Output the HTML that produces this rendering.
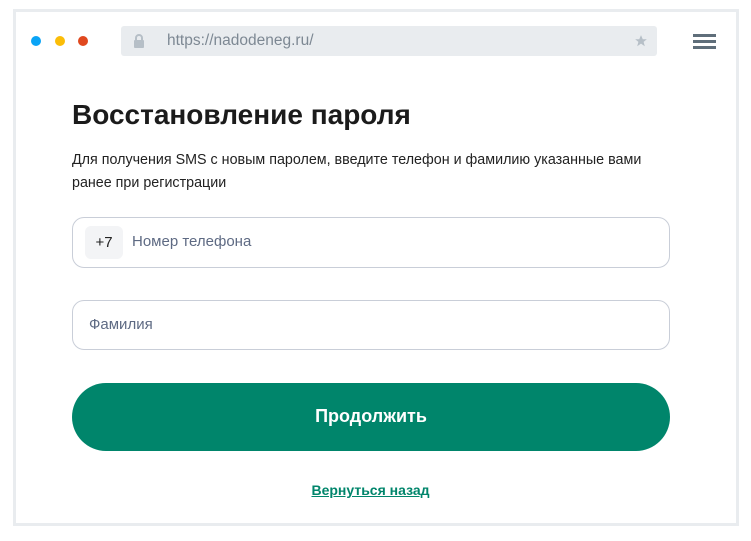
<!DOCTYPE html>
<html><head><meta charset="utf-8"><style>
*{margin:0;padding:0;box-sizing:border-box}
body{width:751px;height:541px;background:#fff;font-family:"Liberation Sans",sans-serif;position:relative;overflow:hidden}
.frame{position:absolute;left:13px;top:9px;width:726px;height:517px;border:3px solid #e9ecef}
.dot{position:absolute;top:36px;width:10px;height:10px;border-radius:50%}
.bar{position:absolute;left:121px;top:26px;width:536px;height:30px;background:#e9ecef;border-radius:3px}
.url{position:absolute;left:46px;top:6px;font-size:15.5px;color:#7d8893}
.hb{position:absolute;left:693px;width:23px;height:3px;background:#5f6e7a}
h1{position:absolute;left:72px;top:99px;font-size:28px;font-weight:bold;color:#1b1b1b}
.p{position:absolute;left:72px;top:149px;font-size:14.3px;line-height:23px;color:#222;width:610px}
.in{position:absolute;left:72px;width:598px;border:1px solid #c9ced8;border-radius:12px;font-size:15px;color:#5e6a83}
.btn{position:absolute;left:72px;top:383px;width:598px;height:68px;border-radius:34px;background:#00856b;color:#fff;font-size:18px;font-weight:bold;text-align:center;line-height:66px}
.lnk{position:absolute;left:-5px;width:751px;top:482px;text-align:center;font-size:14px;font-weight:bold;color:#00856b;text-decoration:underline}
</style></head><body>
<div class="frame"></div>
<div class="dot" style="left:31px;background:#0aa4f6"></div>
<div class="dot" style="left:55px;background:#fbbd08"></div>
<div class="dot" style="left:78px;background:#e0481e"></div>
<div class="bar">
<svg style="position:absolute;left:12px;top:8px" width="12" height="14" viewBox="0 0 12 14"><path d="M3 6V4a3 3 0 0 1 6 0v2" fill="none" stroke="#b6bfc7" stroke-width="2"/><rect x="1" y="6" width="10" height="8" rx="1" fill="#b6bfc7"/></svg>
<div class="url">https://nadodeneg.ru/</div>
<svg style="position:absolute;right:9px;top:8px" width="14" height="14" viewBox="0 0 24 24"><path d="M12 2l3 7h7l-5.5 4.5 2 7.5L12 16.5 5.5 21l2-7.5L2 9h7z" fill="#b6bfc7"/></svg>
</div>
<div class="hb" style="top:34px"></div><div class="hb" style="top:40px"></div><div class="hb" style="top:46px"></div>
<h1>Восстановление пароля</h1>
<div class="p">Для получения SMS с новым паролем, введите телефон и фамилию указанные вами ранее при регистрации</div>
<div class="in" style="top:217px;height:51px">
<div style="position:absolute;left:12px;top:8px;width:38px;height:33px;background:#f3f4f6;border-radius:6px;color:#222;text-align:center;line-height:33px">+7</div>
<div style="position:absolute;left:59px;top:15px">Номер телефона</div>
</div>
<div class="in" style="top:300px;height:50px"><div style="position:absolute;left:16px;top:15px">Фамилия</div></div>
<div class="btn">Продолжить</div>
<div class="lnk">Вернуться назад</div>
</body></html>
